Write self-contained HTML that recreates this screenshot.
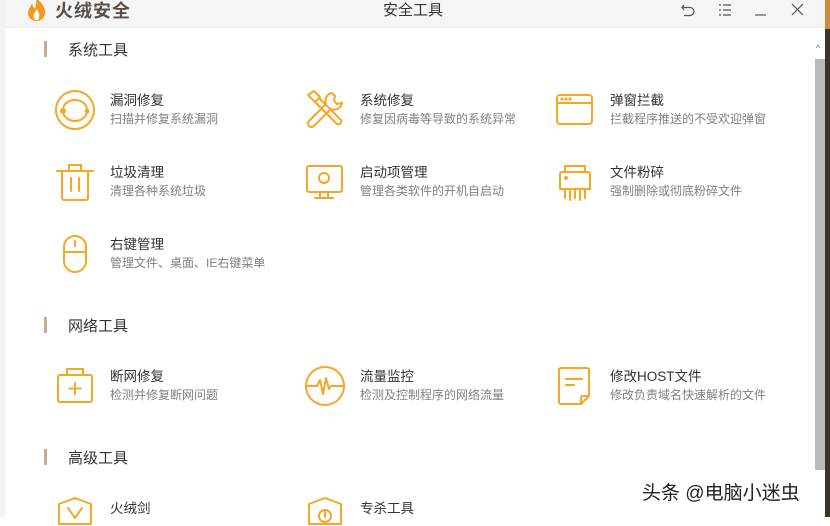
<!DOCTYPE html>
<html><head><meta charset="utf-8"><style>
*{margin:0;padding:0;box-sizing:border-box}
body{width:830px;height:517px;overflow:hidden;background:#fff;position:relative;font-family:"Liberation Sans","Noto Sans CJK SC",sans-serif}
.abs{position:absolute}
.tb{left:5px;top:0;width:822px;height:28px;background:#f5f5f5;border-bottom:1px solid #ececec}
.sec{position:absolute;left:44px;height:16px;border-left:3px solid #c4ad8e}
.sect{position:absolute;left:68px;font-size:15px;color:#333}
.t{position:absolute;font-size:13.5px;color:#333;white-space:nowrap}
.d{position:absolute;font-size:12px;color:#808080;white-space:nowrap}
svg.i{position:absolute;fill:none;stroke:#f5a623;stroke-width:2;stroke-linecap:round;stroke-linejoin:round}
</style></head><body>
<div class="abs" style="left:0;top:0;width:5px;height:517px;background:#f2f2f2"></div>
<div class="abs tb"></div>
<svg class="abs" style="left:26px;top:-2px" width="22" height="24" viewBox="0 0 22 24"><path d="M11 0C15 5 20 9 19 16C18 21 14 23 11 23C6 23 2 20 2 15C2 11 5 9 6 5C7 9 8 10 9 11C10 7 10 4 11 0Z" fill="#f39a1e"/><path d="M11 22C8 22 7 19 8 16C9 14 10 13 11 11C12 14 14 16 13 19C13 21 12 22 11 22Z" fill="#fff"/></svg>
<div class="abs" style="left:55px;top:-3px;font-size:18px;font-weight:bold;color:#5a5048;letter-spacing:1px">火绒安全</div>
<div class="abs" style="left:383px;top:-1px;font-size:15px;color:#333">安全工具</div>
<svg class="abs" style="left:680px;top:1px" width="130" height="18" viewBox="0 0 130 18" fill="none" stroke="#555" stroke-width="1.2"><path d="M4 4L2 6.5L4 9M2 6.5H10A4 4 0 0 1 10 14.5H4"/><path d="M39 4h2M43 4h8M39 9h2M43 9h8M39 14h2M43 14h8"/><path d="M75 14h11"/><path d="M112 3l11 11M123 3l-11 11"/></svg>
<div class="abs" style="left:815px;top:59px;width:10px;height:411px;background:#b9b9b9"></div>
<div class="abs" style="left:816px;top:43px;font-size:9px;color:#777">^</div>
<div class="abs" style="left:825px;top:29px;width:5px;height:488px;background:#3a3528"></div>
<div class="abs" style="left:825px;top:0;width:5px;height:29px;background:#d08a3a"></div>

<div class="sec" style="top:41px"></div><div class="sect" style="top:39px">系统工具</div>
<div class="sec" style="top:317px"></div><div class="sect" style="top:315px">网络工具</div>
<div class="sec" style="top:449px"></div><div class="sect" style="top:447px">高级工具</div>

<!-- row1 -->
<svg class="i" style="left:54px;top:89px" width="42" height="42" viewBox="0 0 42 42"><circle cx="21" cy="21" r="19"/><path d="M9 22A12 10 0 0 1 33 20M33 22A12 10 0 0 1 9 22"/><circle cx="9" cy="22" r="2" fill="#f5a623"/><circle cx="33" cy="22" r="1.5" fill="#f5a623"/></svg>
<div class="t" style="left:110px;top:89px">漏洞修复</div><div class="d" style="left:110px;top:110px">扫描并修复系统漏洞</div>
<svg class="i" style="left:304px;top:89px" width="42" height="42" viewBox="0 0 42 42"><path d="M4 6l6-4 6 6-5 5zM11 13l22 22a3 3 0 0 0 4-4L15 9"/><path d="M28 4a8 8 0 0 0-6 11L5 32a3 3 0 0 0 5 5l17-17a8 8 0 0 0 11-6l-5 1-3-3 1-5z"/></svg>
<div class="t" style="left:360px;top:89px">系统修复</div><div class="d" style="left:360px;top:110px">修复因病毒等导致的系统异常</div>
<svg class="i" style="left:555px;top:93px" width="40" height="34" viewBox="0 0 40 34"><rect x="2" y="2" width="35" height="29" rx="3"/><path d="M2 10h35"/><circle cx="7" cy="6" r=".6" fill="#f5a623"/><circle cx="11" cy="6" r=".6" fill="#f5a623"/><circle cx="15" cy="6" r=".6" fill="#f5a623"/></svg>
<div class="t" style="left:610px;top:89px">弹窗拦截</div><div class="d" style="left:610px;top:110px">拦截程序推送的不受欢迎弹窗</div>
<!-- row2 -->
<svg class="i" style="left:55px;top:162px" width="40" height="40" viewBox="0 0 40 40"><path d="M2 9h36M14 9V3h12v6M7 9v27a2 2 0 0 0 2 2h22a2 2 0 0 0 2-2V9M16 16v13M24 16v13"/></svg>
<div class="t" style="left:110px;top:161px">垃圾清理</div><div class="d" style="left:110px;top:182px">清理各种系统垃圾</div>
<svg class="i" style="left:305px;top:164px" width="40" height="36" viewBox="0 0 40 36"><rect x="2" y="2" width="35" height="26" rx="2"/><circle cx="19" cy="14" r="5"/><path d="M15 28v5M23 28v5M10 34h18"/></svg>
<div class="t" style="left:360px;top:161px">启动项管理</div><div class="d" style="left:360px;top:182px">管理各类软件的开机自启动</div>
<svg class="i" style="left:556px;top:163px" width="38" height="38" viewBox="0 0 38 38"><path d="M9 9V3h20v6M4 26V11a2 2 0 0 1 2-2h26a2 2 0 0 1 2 2v15M4 26h30M9 26v9M14 26v11M19 26v9M24 26v11M29 26v9"/><circle cx="10" cy="15" r="1" fill="#f5a623"/></svg>
<div class="t" style="left:610px;top:161px">文件粉碎</div><div class="d" style="left:610px;top:182px">强制删除或彻底粉碎文件</div>
<!-- row3 -->
<svg class="i" style="left:62px;top:234px" width="26" height="40" viewBox="0 0 26 40"><rect x="2" y="2" width="22" height="36" rx="11"/><path d="M2 18h22M13 7v5"/></svg>
<div class="t" style="left:110px;top:233px">右键管理</div><div class="d" style="left:110px;top:254px">管理文件、桌面、IE右键菜单</div>
<!-- net -->
<svg class="i" style="left:56px;top:366px" width="38" height="38" viewBox="0 0 38 38"><path d="M11 9V3h16v6"/><rect x="2" y="9" width="34" height="27" rx="2"/><path d="M19 17v11M13.5 22.5h11"/></svg>
<div class="t" style="left:110px;top:365px">断网修复</div><div class="d" style="left:110px;top:386px">检测并修复断网问题</div>
<svg class="i" style="left:304px;top:365px" width="42" height="42" viewBox="0 0 42 42"><circle cx="21" cy="21" r="19"/><path d="M2 21h11l3-6 3 14 3-16 3 11 2-3h13"/></svg>
<div class="t" style="left:360px;top:365px">流量监控</div><div class="d" style="left:360px;top:386px">检测及控制程序的网络流量</div>
<svg class="i" style="left:557px;top:366px" width="36" height="40" viewBox="0 0 36 40"><path d="M24 38H4a2 2 0 0 1-2-2V4a2 2 0 0 1 2-2h26a2 2 0 0 1 2 2v26zM24 38v-6a2 2 0 0 1 2-2h6M9 13h16M9 19h8"/></svg>
<div class="t" style="left:610px;top:365px">修改HOST文件</div><div class="d" style="left:610px;top:386px">修改负责域名快速解析的文件</div>
<!-- advanced -->
<svg class="i" style="left:56px;top:496px" width="38" height="30" viewBox="0 0 38 30"><path d="M19 2L35 8v20H3V8zM12 12l7 10 7-10"/></svg>
<div class="t" style="left:110px;top:497px">火绒剑</div>
<svg class="i" style="left:306px;top:496px" width="38" height="30" viewBox="0 0 38 30"><path d="M19 2L35 8v20H3V8z"/><circle cx="19" cy="20" r="6"/><path d="M19 15v6"/></svg>
<div class="t" style="left:360px;top:497px">专杀工具</div>
<div class="abs" style="left:642px;top:478px;font-size:19px;color:#222;text-shadow:0 0 2px #fff,0 0 2px #fff">头条 @电脑小迷虫</div>
</body></html>
